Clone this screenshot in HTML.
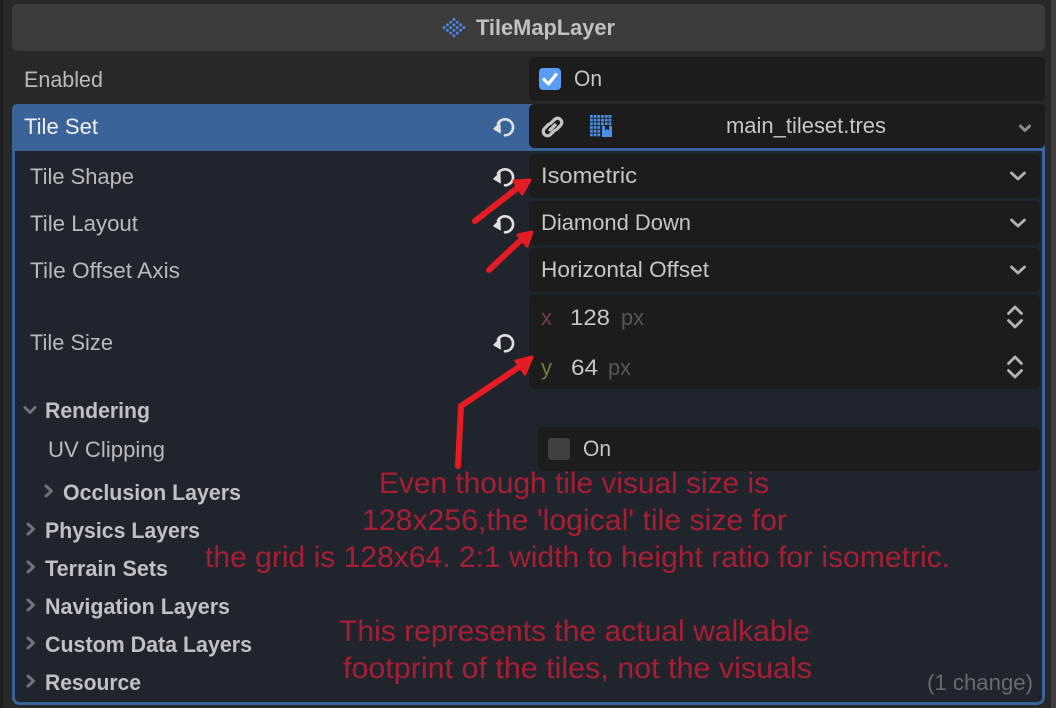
<!DOCTYPE html>
<html><head><meta charset="utf-8"><style>
html,body{margin:0;padding:0;background:#282828;width:1056px;height:708px;overflow:hidden}
svg{display:block}
text{font-family:"Liberation Sans",sans-serif;font-size:22px;fill:#b9babc}
.b{font-weight:bold;fill:#c0c1c5}
.v{fill:#c6c6c6}
.a{font-size:30px;fill:#a81f33}
.c{fill:none;stroke:#b4b4b4;stroke-width:2.8;stroke-linecap:round;stroke-linejoin:round}
.d{fill:none;stroke:#8a8a8a;stroke-width:3;stroke-linecap:round;stroke-linejoin:round}
.g{fill:none;stroke:#6f7278;stroke-width:3;stroke-linecap:round;stroke-linejoin:round}
.r{fill:none;stroke:#e61c24;stroke-width:6;stroke-linecap:round;stroke-linejoin:round}
.h{fill:#e61c24;stroke:#e61c24;stroke-width:3;stroke-linejoin:round}
</style></head><body>
<svg width="1056" height="708" viewBox="0 0 1056 708" xmlns="http://www.w3.org/2000/svg">
<defs>
<g id="reset"><path d="M-6-3.500A8 8 0 1 1 1 8.300" fill="none" stroke="#e0e0e0" stroke-width="2.600" stroke-linecap="round"/><path d="M-10.500 2L-4-4.500L-3.500 6Z" fill="#e0e0e0" stroke="#e0e0e0" stroke-width="0.800" stroke-linejoin="round"/></g>
<path id="chev" class="c" d="M-6.500-3L0 3L6.500-3"/>
<g id="updown"><path class="c" d="M-6.500-3.500L0-10L6.500-3.500"/><path class="c" d="M-6.500 3.500L0 10L6.500 3.500"/></g>
<path id="rt" class="g" d="M-3-5L2.500 0L-3 5"/>
<pattern id="dots" x="590" y="115" width="3.700" height="3.700" patternUnits="userSpaceOnUse"><rect width="2.800" height="2.800" fill="#4a90e8"/></pattern>
</defs>

<rect x="0" y="0" width="3" height="708" fill="#1d1d1d"/>
<rect x="1051" y="0" width="5" height="708" fill="#3f3f3f"/>

<rect x="12" y="4" width="1033" height="47" rx="5" fill="#3c3c3c"/>
<g fill="#4f83e6">
<circle cx="454" cy="19.500" r="1.500"/>
<circle cx="450.700" cy="22.200" r="1.500"/><circle cx="457.300" cy="22.200" r="1.500"/>
<circle cx="447.400" cy="24.900" r="1.500"/><circle cx="454" cy="24.900" r="1.500"/><circle cx="460.600" cy="24.900" r="1.500"/>
<circle cx="444.100" cy="27.600" r="1.500"/><circle cx="450.700" cy="27.600" r="1.500"/><circle cx="457.300" cy="27.600" r="1.500"/><circle cx="463.900" cy="27.600" r="1.500"/>
<circle cx="447.400" cy="30.300" r="1.500"/><circle cx="454" cy="30.300" r="1.500"/><circle cx="460.600" cy="30.300" r="1.500"/>
<circle cx="450.700" cy="33" r="1.500"/><circle cx="457.300" cy="33" r="1.500"/>
<circle cx="454" cy="35.700" r="1.500"/>
</g>
<text class="b" x="476" y="35" textLength="139" lengthAdjust="spacingAndGlyphs">TileMapLayer</text>

<text x="24" y="87" textLength="79" lengthAdjust="spacingAndGlyphs">Enabled</text>
<rect x="529" y="57" width="516" height="44" rx="5" fill="#1c1c1c"/>
<rect x="539" y="68" width="22" height="22" rx="4" fill="#5a9df5"/>
<path d="M544 79.500L548.500 84L556 74.500" fill="none" stroke="#fff" stroke-width="3.200" stroke-linecap="round" stroke-linejoin="round"/>
<text class="v" x="574" y="86" textLength="28" lengthAdjust="spacingAndGlyphs">On</text>

<!-- Tile Set panel -->
<rect x="13.500" y="105.500" width="1030" height="598" rx="6" fill="#20242d" stroke="#3a6399" stroke-width="3"/>
<path d="M12 150V110Q12 104 18 104H1040V151H12Z" fill="#3a6399"/>
<rect x="529" y="104" width="516" height="44" rx="5" fill="#1c1c1c"/>
<rect x="529" y="148" width="516" height="3" fill="#3a6399"/>
<text x="24" y="134" style="fill:#f0f0f0" textLength="74" lengthAdjust="spacingAndGlyphs">Tile Set</text>
<use href="#reset" x="504" y="127"/>
<g fill="none" stroke="#c4c4c4" stroke-width="3.200" stroke-linecap="round" stroke-linejoin="round">
<path d="M550.500 123.500L554.500 119.500A4.200 4.200 0 0 1 560.500 125.500L556.500 129.500"/>
<path d="M554.500 130.500L550.500 134.500A4.200 4.200 0 0 1 544.500 128.500L548.500 124.500"/>
<path d="M550 130L555 125"/>
</g>
<rect x="590" y="115" width="22.200" height="11" fill="url(#dots)"/>
<rect x="590" y="126" width="11" height="11.100" fill="url(#dots)"/>
<path d="M602 126H605V130.500L607 129L609 130.500V126H612V137H602Z" fill="#4a90e8"/>
<text class="v" x="726" y="133" textLength="160" lengthAdjust="spacingAndGlyphs">main_tileset.tres</text>
<path class="d" d="M1020.500 126L1025 130.500L1029.500 126"/>

<!-- rows -->
<g fill="#1c1c1c">
<rect x="529" y="154" width="511" height="44" rx="5"/>
<rect x="529" y="201" width="511" height="44" rx="5"/>
<rect x="529" y="248" width="511" height="44" rx="5"/>
<rect x="529" y="295" width="511" height="94" rx="5"/>
<rect x="538" y="427" width="502" height="44" rx="5"/>
</g>
<text x="30" y="184" textLength="104" lengthAdjust="spacingAndGlyphs">Tile Shape</text>
<use href="#reset" x="504" y="177"/>
<text class="v" x="541" y="183" textLength="96" lengthAdjust="spacingAndGlyphs">Isometric</text>
<use href="#chev" x="1018" y="176"/>

<text x="30" y="231" textLength="108" lengthAdjust="spacingAndGlyphs">Tile Layout</text>
<use href="#reset" x="504" y="224"/>
<text class="v" x="541" y="230" textLength="150" lengthAdjust="spacingAndGlyphs">Diamond Down</text>
<use href="#chev" x="1018" y="223"/>

<text x="30" y="278" textLength="150" lengthAdjust="spacingAndGlyphs">Tile Offset Axis</text>
<text class="v" x="541" y="277" textLength="168" lengthAdjust="spacingAndGlyphs">Horizontal Offset</text>
<use href="#chev" x="1018" y="270"/>

<text x="30" y="350" textLength="83" lengthAdjust="spacingAndGlyphs">Tile Size</text>
<use href="#reset" x="504" y="343"/>
<text x="541" y="325" style="fill:#7a3a4c" textLength="11" lengthAdjust="spacingAndGlyphs">x</text>
<text class="v" x="570" y="325" textLength="40" lengthAdjust="spacingAndGlyphs">128</text>
<text x="621" y="325" style="fill:#565656" textLength="23" lengthAdjust="spacingAndGlyphs">px</text>
<use href="#updown" x="1015" y="317"/>
<text x="541" y="375" style="fill:#6e7f3e" textLength="11" lengthAdjust="spacingAndGlyphs">y</text>
<text class="v" x="571" y="375" textLength="27" lengthAdjust="spacingAndGlyphs">64</text>
<text x="608" y="375" style="fill:#565656" textLength="23" lengthAdjust="spacingAndGlyphs">px</text>
<use href="#updown" x="1015" y="367"/>

<path class="g" d="M25 407.500L30 412.500L35 407.500"/>
<text class="b" x="45" y="418" textLength="105" lengthAdjust="spacingAndGlyphs">Rendering</text>
<text x="48" y="457" textLength="117" lengthAdjust="spacingAndGlyphs">UV Clipping</text>
<rect x="548" y="438" width="22" height="22" rx="3" fill="#404040"/>
<text class="v" x="583" y="456" textLength="28" lengthAdjust="spacingAndGlyphs">On</text>

<use href="#rt" x="49" y="491"/>
<text class="b" x="63" y="500" textLength="178" lengthAdjust="spacingAndGlyphs">Occlusion Layers</text>
<use href="#rt" x="31" y="529"/>
<text class="b" x="45" y="538" textLength="155" lengthAdjust="spacingAndGlyphs">Physics Layers</text>
<use href="#rt" x="31" y="567"/>
<text class="b" x="45" y="576" textLength="123" lengthAdjust="spacingAndGlyphs">Terrain Sets</text>
<use href="#rt" x="31" y="605"/>
<text class="b" x="45" y="614" textLength="185" lengthAdjust="spacingAndGlyphs">Navigation Layers</text>
<use href="#rt" x="31" y="643"/>
<text class="b" x="45" y="652" textLength="207" lengthAdjust="spacingAndGlyphs">Custom Data Layers</text>
<use href="#rt" x="31" y="681"/>
<text class="b" x="45" y="690" textLength="96" lengthAdjust="spacingAndGlyphs">Resource</text>
<text x="927" y="690" style="fill:#686b70" textLength="106" lengthAdjust="spacingAndGlyphs">(1 change)</text>

<!-- annotations -->
<text class="a" x="379" y="493" textLength="390" lengthAdjust="spacingAndGlyphs">Even though tile visual size is</text>
<text class="a" x="362" y="530" textLength="425" lengthAdjust="spacingAndGlyphs">128x256,the 'logical' tile size for</text>
<text class="a" x="205" y="567" textLength="745" lengthAdjust="spacingAndGlyphs">the grid is 128x64. 2:1 width to height ratio for isometric.</text>
<text class="a" x="339" y="641" textLength="471" lengthAdjust="spacingAndGlyphs">This represents the actual walkable</text>
<text class="a" x="343" y="678" textLength="469" lengthAdjust="spacingAndGlyphs">footprint of the tiles, not the visuals</text>

<!-- arrows -->
<path class="r" d="M475 221L520 186"/>
<path class="h" d="M530 180L514 181L522 194Z"/>
<path class="r" d="M489 270L523 238"/>
<path class="h" d="M532 232L518 235L527 246Z"/>
<path class="r" d="M458 466L461 406L522 365"/>
<path class="h" d="M532 357L516 361L525 374Z"/>
</svg>
</body></html>
